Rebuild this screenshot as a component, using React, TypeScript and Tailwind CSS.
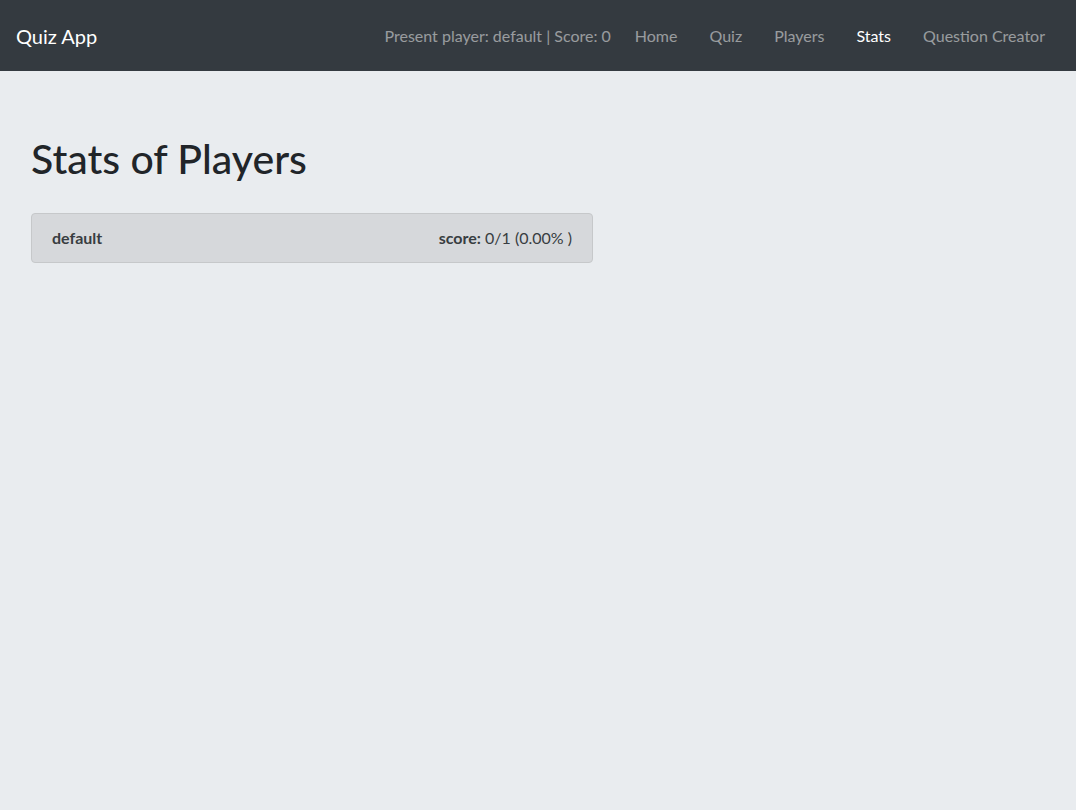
const links = [
  { label: 'Home', active: false },
  { label: 'Quiz', active: false },
  { label: 'Players', active: false },
  { label: 'Stats', active: true },
  { label: 'Question Creator', active: false },
];

const players = [{ name: 'default', correct: 0, total: 1 }];

export default function App() {
  return (
    <div className="flex min-h-[810px] w-full bg-white font-['Lato','Noto_Sans',sans-serif]">
      <div className="flex w-[1076px] flex-col bg-[#e9ecef]">
        <nav className="flex h-[71px] items-center justify-between bg-[#343a40] pl-4 pr-[15px]">
          <span className="text-[20px] text-white">Quiz App</span>
          <div className="flex items-center text-[16px]">
            <span className="mr-2 text-white/50">
              Present player: default | Score: 0
            </span>
            {links.map((l) => (
              <a
                key={l.label}
                className={`px-4 ${l.active ? 'text-white' : 'text-white/50'}`}
              >
                {l.label}
              </a>
            ))}
          </div>
        </nav>

        <main className="pl-[31px] pt-[63px]">
          <h1 className="mb-[30px] text-[41px] leading-[1.2] font-medium text-[#212529]">
            Stats of Players
          </h1>
          <div className="w-[562px]">
            {players.map((p) => (
              <div
                key={p.name}
                className="flex items-center justify-between rounded border border-[#c6c8ca] bg-[#d6d8db] px-5 py-3 text-[16px] leading-6 text-[#383d41]"
              >
                <span className="font-bold">{p.name}</span>
                <span>
                  <span className="font-bold">score:</span> {p.correct}/{p.total} (
                  {((p.correct / p.total) * 100).toFixed(2)}% )
                </span>
              </div>
            ))}
          </div>
        </main>
      </div>
      <div className="w-[2px] bg-white" />
    </div>
  );
}
